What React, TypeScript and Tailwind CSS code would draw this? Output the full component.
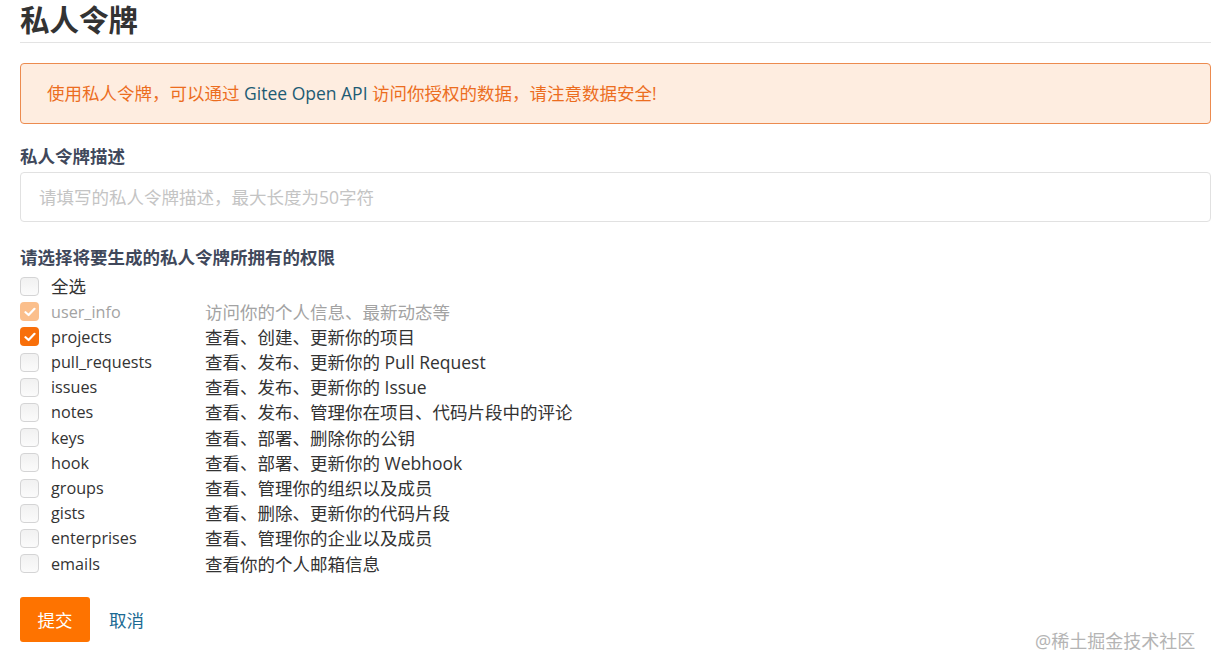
import React from "react";

const FONT = '"Open Sans", "Noto Sans CJK SC", sans-serif';

type Row = { name: string; desc: string; state?: "checked" | "disabled" };

const rows: Row[] = [
  { name: "user_info", desc: "访问你的个人信息、最新动态等", state: "disabled" },
  { name: "projects", desc: "查看、创建、更新你的项目", state: "checked" },
  { name: "pull_requests", desc: "查看、发布、更新你的 Pull Request" },
  { name: "issues", desc: "查看、发布、更新你的 Issue" },
  { name: "notes", desc: "查看、发布、管理你在项目、代码片段中的评论" },
  { name: "keys", desc: "查看、部署、删除你的公钥" },
  { name: "hook", desc: "查看、部署、更新你的 Webhook" },
  { name: "groups", desc: "查看、管理你的组织以及成员" },
  { name: "gists", desc: "查看、删除、更新你的代码片段" },
  { name: "enterprises", desc: "查看、管理你的企业以及成员" },
  { name: "emails", desc: "查看你的个人邮箱信息" },
];

function Box({ state }: { state?: "checked" | "disabled" }) {
  if (state === "checked" || state === "disabled") {
    return (
      <span
        className={
          "flex h-[19px] w-[19px] shrink-0 items-center justify-center rounded-[4px] " +
          (state === "checked" ? "bg-[#f86f0a]" : "bg-[#fbbf8c]")
        }
      >
        <svg width="12" height="10" viewBox="0 0 12 10" fill="none">
          <path d="M1.5 5.2 L4.6 8 L10.5 1.8" stroke="white" strokeWidth="2.2" strokeLinecap="round" strokeLinejoin="round" />
        </svg>
      </span>
    );
  }
  return (
    <span className="block h-[19px] w-[19px] shrink-0 rounded-[4px] border border-[#d4d4d5] bg-gradient-to-b from-[#f1f1f1] to-[#fbfbfb]" />
  );
}

export default function App() {
  return (
    <div className="relative h-[670px] w-[1215px] bg-white pl-[20px] pr-[4px]" style={{ fontFamily: FONT }}>
      <div className="border-b border-[#e3e3e3] pb-[2px]">
        <h1 className="text-[29.5px] font-bold leading-[40px] text-[#333333]">私人令牌</h1>
      </div>

      <div className="mt-[20px] flex h-[61px] items-center rounded-[4px] border border-[#ec8b4f] bg-[#feede0] pl-[26px] text-[17.5px] text-[#ec6d1f]">
        <span>
          使用私人令牌，可以通过 <span className="text-[#1d5b74]">Gitee Open API</span> 访问你授权的数据，请注意数据安全!
        </span>
      </div>

      <div className="mt-[20px] text-[17.5px] font-bold leading-[24px] text-[#40485b]">私人令牌描述</div>
      <div className="mt-[4px] flex h-[50px] items-center rounded-[4px] border border-[#e1e1e1] pl-[18px] text-[17.5px] text-[#c4c4c4]">
        请填写的私人令牌描述，最大长度为50字符
      </div>

      <div className="mt-[23px] text-[17.5px] font-bold leading-[24px] text-[#40485b]">请选择将要生成的私人令牌所拥有的权限</div>

      <div className="mt-[5px] flex flex-col text-[17.5px] text-[#333333]">
        <div className="flex h-[25.2px] items-center">
          <Box />
          <span className="ml-[12px]">全选</span>
        </div>
        {rows.map((r) => (
          <div key={r.name} className={"flex h-[25.2px] items-center " + (r.state === "disabled" ? "text-[#a3a3a3]" : "")}>
            <Box state={r.state} />
            <span className="ml-[12px] w-[154px] text-[16.2px]">{r.name}</span>
            <span>{r.desc}</span>
          </div>
        ))}
      </div>

      <div className="mt-[21px] flex items-center">
        <button className="flex h-[45px] w-[70px] items-center justify-center rounded-[3px] bg-[#fe7300] text-[17.5px] text-white">
          提交
        </button>
        <span className="ml-[19px] text-[17.5px] text-[#1b6a93]">取消</span>
      </div>

      <div className="absolute left-[1035px] top-[628px] text-[18px] text-[#b4b4b4]">@稀土掘金技术社区</div>
    </div>
  );
}
